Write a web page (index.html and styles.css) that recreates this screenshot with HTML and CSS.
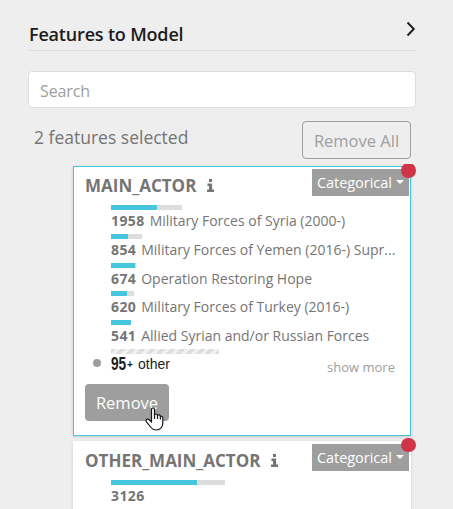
FILE: index.html
```html
<!DOCTYPE html>
<html lang="en">
<head>
<meta charset="utf-8">
<title>Features to Model</title>
<link rel="stylesheet" href="styles.css">
</head>
<body>
<main class="panel">
  <header class="panel-head">
    <h1 class="panel-title">Features to Model</h1>
    <svg class="chevron" viewBox="0 0 10 16"><path d="M1.5 1.500 7.800 8 1.500 14.500" fill="none" stroke="#1c1c1c" stroke-width="1.900"/></svg>
  </header>
  <input class="search" type="text" placeholder="Search" aria-label="Search">
  <div class="toolbar">
    <span class="count">2 features selected</span>
    <button class="remove-all"><span>Remove All</span></button>
  </div>
  <section class="list">
    <article class="card card-active">
      <div class="card-head">
        <h2 class="name">MAIN_ACTOR</h2>
        <svg class="info" viewBox="0 0 7 13"><path d="M2 0h3v3H2zM0.500 4.500h4.600v6H7V13H0v-2.500h2V7H.5z" fill="#757575"/></svg>
        <button class="type"><span>Categorical</span><i class="caret"></i></button>
      </div>
      <i class="dot"></i>
      <ul class="facets">
        <li class="facet"><div class="bar" style="width:71px"><i style="width:46px"></i></div><p><b>1958</b><span>Military Forces of Syria (2000-)</span></p></li>
        <li class="facet"><div class="bar" style="width:31px"><i style="width:17px"></i></div><p><b>854</b><span>Military Forces of Yemen (2016-) Supr...</span></p></li>
        <li class="facet"><div class="bar" style="width:25px"><i style="width:24px"></i></div><p><b>674</b><span>Operation Restoring Hope</span></p></li>
        <li class="facet"><div class="bar" style="width:23px"><i style="width:16px"></i></div><p><b>620</b><span>Military Forces of Turkey (2016-)</span></p></li>
        <li class="facet"><div class="bar" style="width:20px"><i style="width:20px"></i></div><p><b>541</b><span>Allied Syrian and/or Russian Forces</span></p></li>
        <li class="facet other"><div class="bar striped" style="width:108px"></div><i class="bullet"></i><p><strong class="more-count"><em>95</em><small>+</small></strong><span class="other-label">other</span><a class="show-more">show more</a></p></li>
      </ul>
      <button class="remove"><span>Remove</span></button>
      <svg class="cursor" viewBox="0 0 19 24"><path d="M6.500 14V2.500Q6.500 1 8 1T9.500 2.500V8Q10 7 11.200 7T12.500 8.500Q13 7.700 14.100 7.800T15.400 9.400Q17.800 8.700 17.800 11V16Q17.800 19 16 21Q14.500 23 11 23Q8 23 6 20.500L1.500 14.800Q.5 13 2 12.300Q3.200 11.800 4.500 13L6.500 15Z" fill="#fff" stroke="#15151f" stroke-width="1.200" stroke-linejoin="round"/><path d="M9.500 7v5M12.500 8v4M15.400 9v3.500" stroke="#15151f" stroke-width="1.200"/></svg>
    </article>
    <article class="card">
      <div class="card-head">
        <h2 class="name">OTHER_MAIN_ACTOR</h2>
        <svg class="info" viewBox="0 0 7 13"><path d="M2 0h3v3H2zM0.500 4.500h4.600v6H7V13H0v-2.500h2V7H.5z" fill="#757575"/></svg>
        <button class="type"><span>Categorical</span><i class="caret"></i></button>
      </div>
      <i class="dot"></i>
      <ul class="facets">
        <li class="facet"><div class="bar" style="width:114px"><i style="width:86px"></i></div><p><b>3126</b></p></li>
      </ul>
    </article>
  </section>
</main>
</body>
</html>
```
FILE: styles.css
```css
* { box-sizing: border-box; }
html, body { height: 100%; overflow: hidden; }
body { margin: 0; background: #eee; color: #757575; font-family: "Open Sans", "Noto Sans", sans-serif; }
button { font: inherit; padding: 0; margin: 0; }
p, h1, h2, ul { margin: 0; padding: 0; }
ul { list-style: none; }
span, b, h1, h2, a { white-space: nowrap; }

.panel { width: 388px; height: 509px; margin-left: 28px; padding-top: 13px; display: flex; flex-direction: column; overflow: visible; }
.panel-head { height: 38px; flex: none; display: flex; justify-content: space-between; border-bottom: 1px solid #ddd; padding: 8px 0 0 1px; }
.panel-title { font-size: 18px; line-height: 26px; font-weight: 600; letter-spacing: -0.18px; color: #1c1c1c; }
.chevron { width: 10px; height: 16px; }
.search { flex: none; height: 37px; margin-top: 20px; border: 1px solid #ddd; border-radius: 4px; padding: 2px 11px 0; font: 16px "Open Sans", sans-serif; letter-spacing: -0.1px; background: #fff; outline: none; }
.search::placeholder { color: #9e9e9e; opacity: 1; }
.toolbar { flex: none; display: flex; justify-content: space-between; margin-top: 13px; padding: 0 5px 0 6px; height: 38px; }
.count { font-size: 17.500px; line-height: 33px; letter-spacing: 0; }
.remove-all { width: 109px; height: 38px; border: 1px solid #9e9e9e; border-radius: 4px; background: transparent; color: #9e9e9e; font-size: 16.500px; letter-spacing: 0; }

.list { flex: 1; margin: 5px -10px 0 40px; padding: 2px 15px 0 5px; overflow: hidden; }
.card { position: relative; height: 270px; margin-bottom: 5px; padding: 3px 2px 0 12px; background: #fff; box-shadow: 0 1px 3px rgba(0,0,0,.16); }
.card-active { border: 1px solid #46c6de; padding: 2px 1px 0 11px; }
.card-head { height: 27px; display: flex; }
.name { font-size: 17px; font-weight: 700; line-height: 34px; letter-spacing: 0; }
.info { width: 7px; height: 13px; margin: 10px 0 0 11px; }
.type { width: 97px; height: 27px; margin-left: auto; padding: 0 0 1px 5px; display: flex; align-items: center; gap: 4px; border: 0; background: #9e9e9e; color: #fff; font-size: 14.500px; }
.type span { letter-spacing: -0.05px; }
.caret { border: 4px solid transparent; border-top-color: #fff; border-bottom: 0; }
.dot { position: absolute; top: -3.500px; right: -4.500px; width: 14.500px; height: 14.500px; border-radius: 50%; background: #d13447; }
.card-active .dot { top: -4px; right: -5.500px; }
.facets { margin: 9px 0 0 26px; }
.facet { height: 28.800px; position: relative; }
.bar { height: 5px; background: #ddd; }
.bar i { display: block; height: 5px; background: #46c6de; }
.striped { background: repeating-linear-gradient(135deg, #ddd 0 3.500px, #f1f1f1 3.500px 7px); }
.facet p { display: flex; align-items: center; height: 21px; font-size: 14px; gap: 5px; }
.facet b { font-weight: 700; letter-spacing: 0.4px; }
.facet span { letter-spacing: 0; }
.bullet { position: absolute; left: -18px; top: 10px; width: 8px; height: 8px; border-radius: 50%; background: #9e9e9e; }
.more-count { display: flex; align-items: center; width: 22px; height: 21px; color: #1c1c1c; font: 700 18px "Liberation Sans", sans-serif; }
.more-count em { width: 16px; font-style: normal; transform: scaleX(.76); transform-origin: left; }
.more-count small { font-size: 10px; font-weight: 700; }
.facet .other-label { color: #1c1c1c; font: 14px "Liberation Sans", sans-serif; letter-spacing: 0; }
.show-more { margin-left: auto; margin-right: 14px; color: #9e9e9e; font-size: 13px; position: relative; top: 3px; }
.remove { display: block; width: 84px; height: 37px; margin-top: 6px; border: 0; border-radius: 4px; background: #9e9e9e; color: #fff; font-size: 16.500px; letter-spacing: 0; }
.cursor { position: absolute; left: 71px; top: 240px; width: 19px; height: 24px; }
```
